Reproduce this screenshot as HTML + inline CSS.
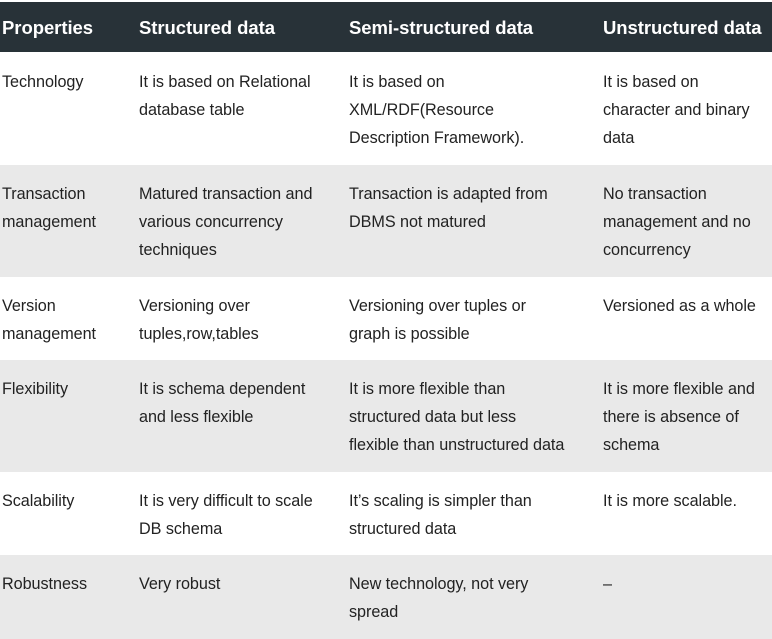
<!DOCTYPE html>
<html><head><meta charset="utf-8"><style>
*{margin:0;padding:0;box-sizing:border-box}
body{width:772px;height:639px;background:#fff;font-family:"Liberation Sans",sans-serif;color:#222;overflow:hidden;position:relative}
.row{position:absolute;left:0;width:772px}
.h{top:2px;height:50px;background:#283238;color:#fff;font-weight:bold;font-size:18.5px;letter-spacing:-0.2px}
.g{background:#e9e9e9}
.c{position:absolute;font-size:16.2px;line-height:28px;letter-spacing:-0.05px}
.h .c{top:12px;line-height:28px;font-size:18.5px}
.c1{left:2px}.c2{left:139px}.c3{left:349px}.c4{left:603px}
.r .c{top:15px}
</style></head><body>
<div class="row h"><div class="c c1">Properties</div><div class="c c2">Structured data</div><div class="c c3">Semi-structured data</div><div class="c c4">Unstructured data</div></div>
<div class="row r" style="top:53px;height:112px"><div class="c c1">Technology</div><div class="c c2">It is based on Relational<br>database table</div><div class="c c3">It is based on<br>XML/RDF(Resource<br>Description Framework).</div><div class="c c4">It is based on<br>character and binary<br>data</div></div>
<div class="row r g" style="top:165px;height:112px"><div class="c c1">Transaction<br>management</div><div class="c c2">Matured transaction and<br>various concurrency<br>techniques</div><div class="c c3">Transaction is adapted from<br>DBMS not matured</div><div class="c c4">No transaction<br>management and no<br>concurrency</div></div>
<div class="row r" style="top:277px;height:83px"><div class="c c1">Version<br>management</div><div class="c c2">Versioning over<br>tuples,row,tables</div><div class="c c3">Versioning over tuples or<br>graph is possible</div><div class="c c4">Versioned as a whole</div></div>
<div class="row r g" style="top:360px;height:112px"><div class="c c1">Flexibility</div><div class="c c2">It is schema dependent<br>and less flexible</div><div class="c c3">It is more flexible than<br>structured data but less<br>flexible than unstructured data</div><div class="c c4">It is more flexible and<br>there is absence of<br>schema</div></div>
<div class="row r" style="top:472px;height:83px"><div class="c c1">Scalability</div><div class="c c2">It is very difficult to scale<br>DB schema</div><div class="c c3">It’s scaling is simpler than<br>structured data</div><div class="c c4">It is more scalable.</div></div>
<div class="row r g" style="top:555px;height:84px"><div class="c c1">Robustness</div><div class="c c2">Very robust</div><div class="c c3">New technology, not very<br>spread</div><div class="c c4">–</div></div>
</body></html>
